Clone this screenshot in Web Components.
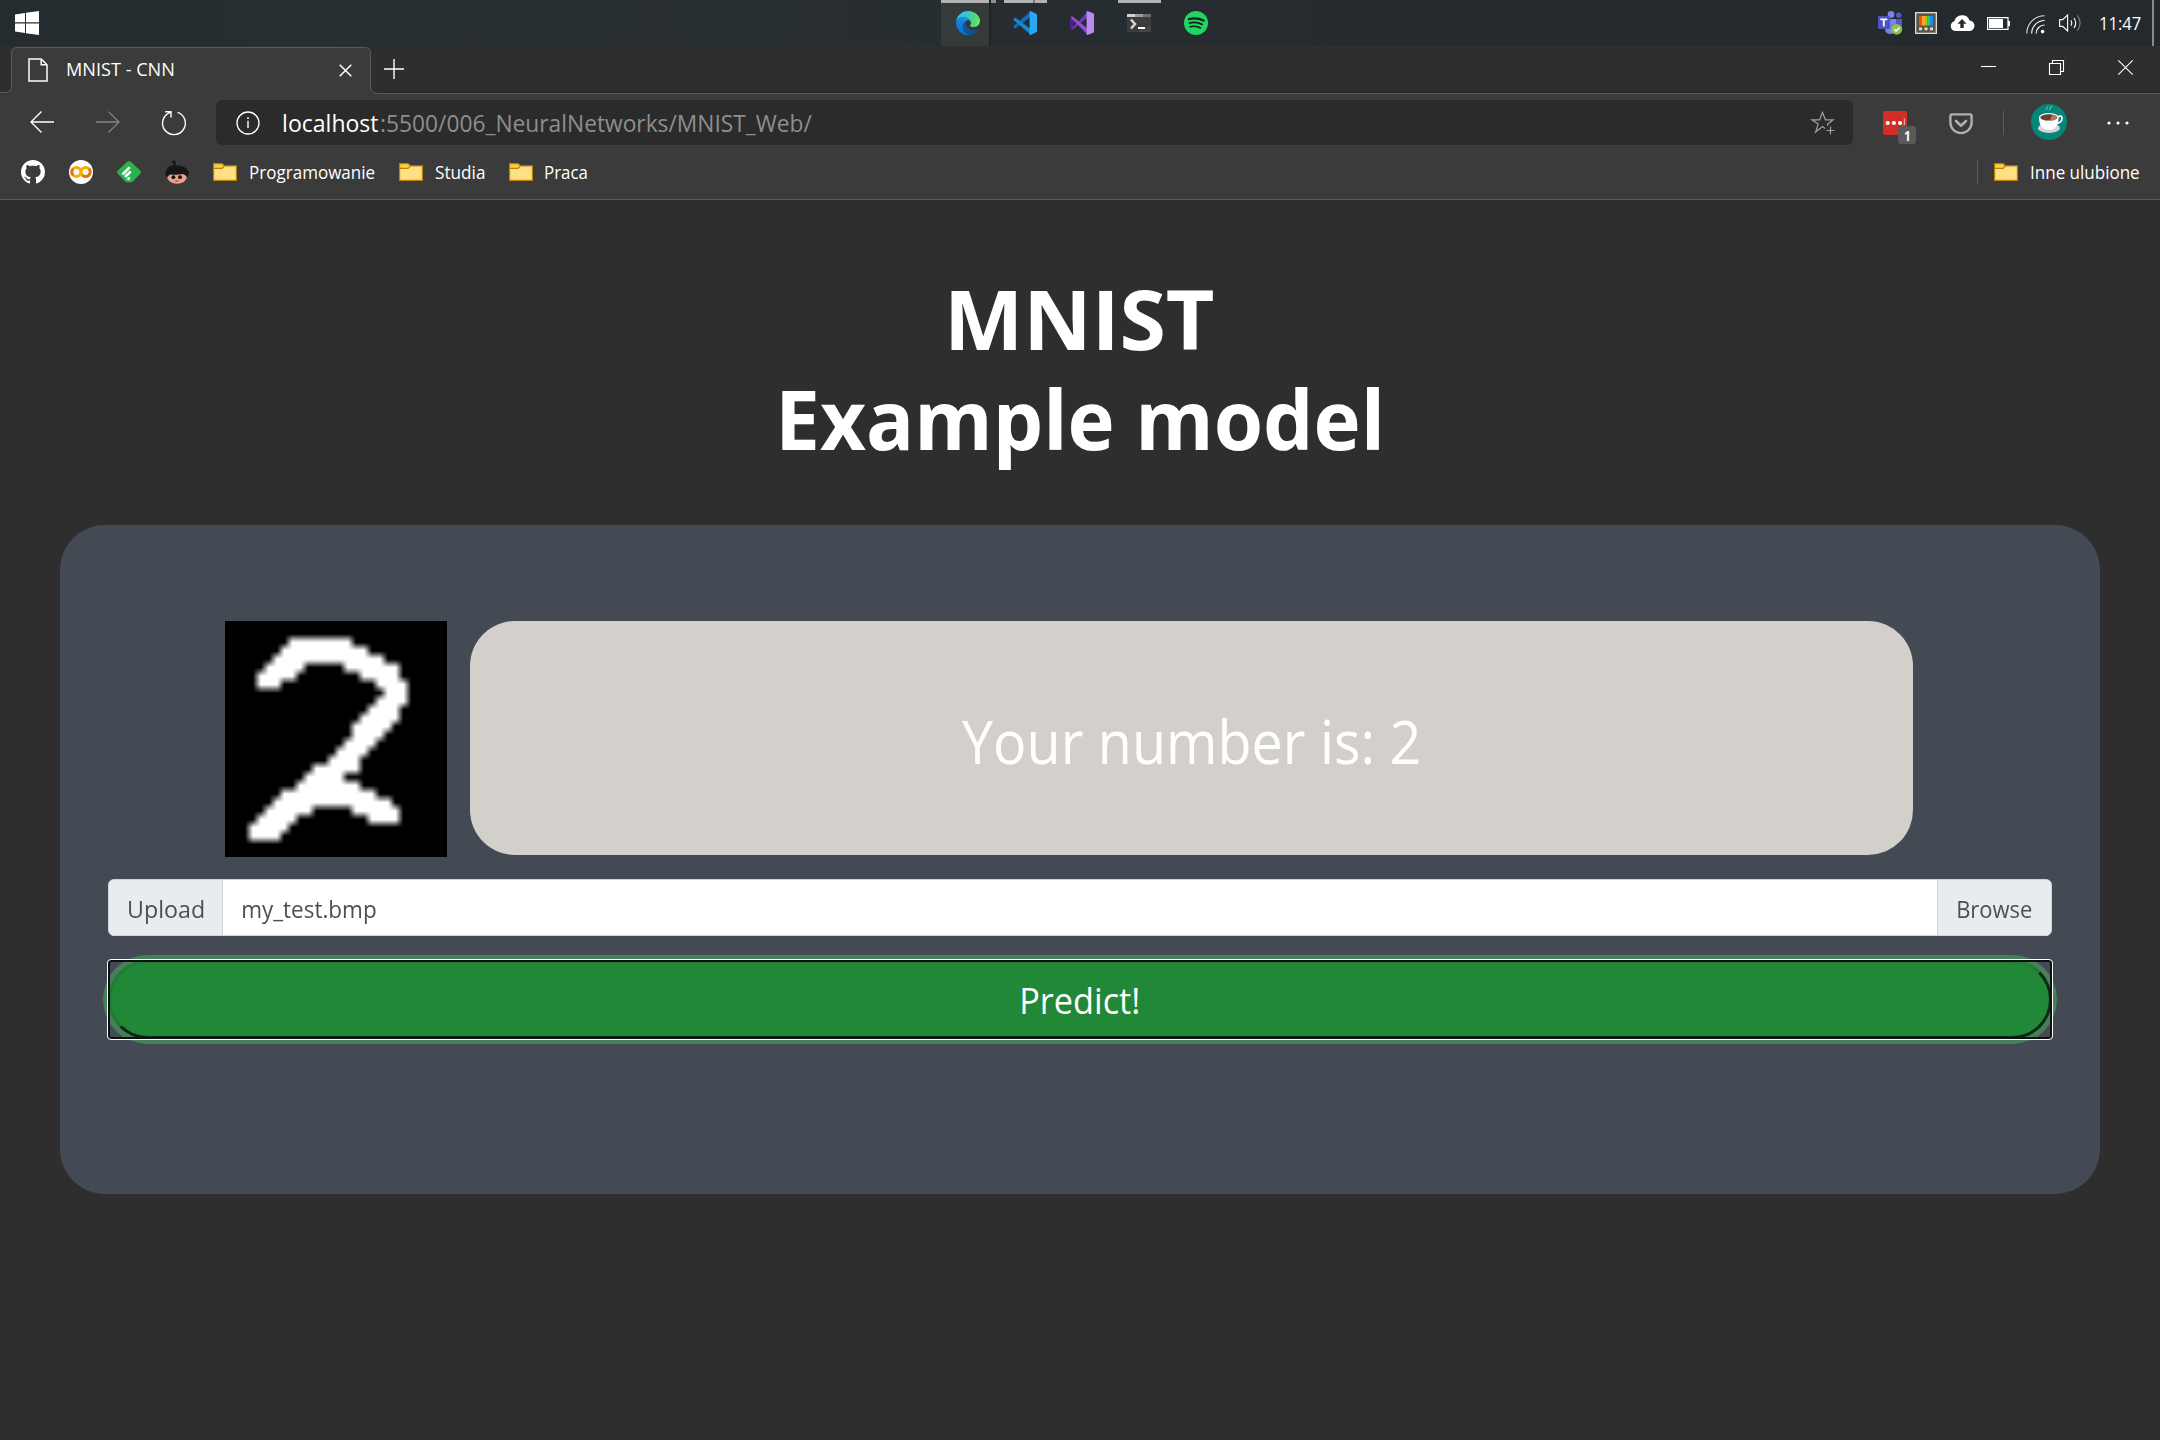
<!DOCTYPE html>
<html lang="pl">
<head>
<meta charset="utf-8">
<title>MNIST - CNN</title>
<style>
html,body{margin:0;padding:0;background:#2e2e2e}
body{width:2160px;height:1440px;overflow:hidden;font-family:"Open Sans","Noto Sans",sans-serif;color:#fff}
</style>
</head>
<body>
<desktop-screen></desktop-screen>
<script>
const define = (name, markup, setup) => customElements.define(name, class extends HTMLElement {
  constructor() {
    super();
    const t = document.createElement('template');
    t.innerHTML = markup;
    this.attachShadow({ mode: 'open' }).appendChild(t.content.cloneNode(true));
  }
  connectedCallback() { if (setup) setup.call(this, this.shadowRoot); }
});

/* A label whose glyphs span exactly the width given in `ink`. */
define('fit-text', `<style>
:host{display:block;flex:none;white-space:pre;overflow:visible}
span{display:inline-block;transform-origin:0 50%;white-space:pre}
</style><span><slot></slot></span>`, function (root) {
  const size = +this.getAttribute('size'), ink = +this.getAttribute('ink');
  const weight = this.getAttribute('weight') || 400;
  const ctx = document.createElement('canvas').getContext('2d');
  ctx.font = `${weight} ${size}px "Open Sans","Noto Sans",sans-serif`;
  const m = ctx.measureText(this.textContent);
  const scale = ink / (m.actualBoundingBoxLeft + m.actualBoundingBoxRight);
  const line = +this.getAttribute('line') || Math.round(size * 1.4);
  this.style.cssText += `;width:${ink}px;height:${line}px;line-height:${line}px;font-size:${size}px;font-weight:${weight}`;
  root.querySelector('span').style.transform = `translateX(${m.actualBoundingBoxLeft * scale}px) scaleX(${scale})`;
});

const ICONS = {
  windows: [24, 24, '<path fill="#fff" d="M0 3.4 10 2V11.3H0zM11 1.8 24 0V11.3H11zM0 12.4H10V22L0 20.6zM11 12.4H24V24L11 22.2z"/>'],
  edge: [256, 256, `<defs><linearGradient id="a" x1="63" y1="178" x2="242" y2="178" gradientUnits="userSpaceOnUse"><stop offset="0" stop-color="#0c59a4"/><stop offset="1" stop-color="#114a8b"/></linearGradient><linearGradient id="b" x1="157" y1="100" x2="46" y2="221" gradientUnits="userSpaceOnUse"><stop offset="0" stop-color="#1b9de2"/><stop offset=".4" stop-color="#1387d9"/><stop offset="1" stop-color="#0678d4"/></linearGradient><linearGradient id="c" x1="10" y1="60" x2="245" y2="110" gradientUnits="userSpaceOnUse"><stop offset="0" stop-color="#35c1f1"/><stop offset=".4" stop-color="#36c5dd"/><stop offset=".75" stop-color="#4fd67b"/><stop offset="1" stop-color="#66eb6e"/></linearGradient></defs>
<path fill="url(#a)" d="M235.68 195.46a93.73 93.73 0 0 1-10.54 4.71 101.87 101.87 0 0 1-35.9 6.46c-47.32 0-88.54-32.55-88.54-74.32a31.48 31.48 0 0 1 16.43-27.31c-42.8 1.8-53.8 46.4-53.8 72.53 0 73.88 68.09 81.37 82.76 81.37 7.91 0 19.84-2.3 27-4.56l1.31-.44a128.34 128.34 0 0 0 66.6-52.8 4 4 0 0 0-5.32-5.64Z"/><path fill="url(#b)" d="M105.73 241.42a79.2 79.2 0 0 1-22.74-21.34 80.72 80.72 0 0 1 29.53-120c3.12-1.47 8.45-4.13 15.54-4a32.35 32.35 0 0 1 25.69 13 31.88 31.88 0 0 1 6.36 18.66c0-.21 24.46-79.6-80-79.6-43.9 0-80 41.66-80 78.21a130.15 130.15 0 0 0 12.11 56 128 128 0 0 0 156.38 67.11 75.55 75.55 0 0 1-62.78-8Z"/><path fill="url(#c)" d="M152.33 148.86c-.81 1.05-3.3 2.5-3.3 5.66 0 2.61 1.7 5.12 4.72 7.23 14.38 10 41.49 8.68 41.56 8.68a59.56 59.56 0 0 0 30.27-8.35 61.38 61.38 0 0 0 30.43-52.88c.26-22.41-8-37.31-11.34-43.91C223.46 23.84 177.72 0 128 0A128 128 0 0 0 0 126.2c.48-36.54 36.8-66.05 80-66.05 3.5 0 23.46.34 42 10.07 16.34 8.58 24.9 18.94 30.85 29.21 6.18 10.67 7.28 24.15 7.28 29.52s-2.74 13.33-7.8 19.91Z"/>`],
  vscode: [24, 24, '<path fill="#0b6fb5" d="M.3 15.7 1.7 17.3Q2.1 17.7 2.6 17.3L18 5.8V0L.3 15.2Q0 15.5.3 15.7z"/><path fill="#1488d2" d="M.3 8.3 1.7 6.7Q2.1 6.3 2.6 6.7L18 18.2V24L.3 8.8Q0 8.5.3 8.3z"/><path fill="#29a9f1" d="M17.4 0 23.2 2.7Q24 3.1 24 4V20Q24 20.9 23.2 21.3L17.4 24Q16.4 24 16.6 23.2V.8Q16.4 0 17.4 0z"/>'],
  vs: [24, 24, '<path fill="#52218a" d="M0 6.5 1 5.8 3.6 6.8V17.2L1 18.2 0 17.5z"/><path fill="#7538b5" d="M1 18.2 18 0V6L4 17.5Q2.5 18.8 1 18.2z"/><path fill="#934fd4" d="M1 5.8Q2.5 5.2 4 6.5L18 18V24L1.5 7.5z"/><path fill="#b98aef" d="M17.5 0 23.2 2.3Q24 2.6 24 3.5V20.5Q24 21.4 23.2 21.7L17.5 24Q16.6 24 16.6 23V1Q16.6 0 17.5 0z"/>'],
  terminal: [24, 18, '<path fill="#454545" d="M0 0H24V18H0z"/><path fill="#2b2b2b" d="M0 3H24V10L10 18H0z" opacity=".35"/><path fill="#d0d0d0" d="M0 0H8V3H0z"/><path fill="#9c9c9c" d="M8 0H16V3H8z"/><path fill="#707070" d="M16 0H24V3H16z"/><path fill="none" stroke="#d5d5d5" stroke-width="2.5" d="M4 5.5 8 10 4 14.5"/><path fill="#fff" d="M11 13H18V15H11z"/>'],
  spotify: [24, 24, '<circle cx="12" cy="12" r="12" fill="#1ed760"/><g fill="none" stroke="#171d1c" stroke-linecap="round"><path stroke-width="2.3" d="M5 8.1Q12.5 5.9 19.6 9.6"/><path stroke-width="1.9" d="M5.5 12.1Q12 10.2 18 13.3"/><path stroke-width="1.5" d="M6 15.8Q11.7 14.3 16.6 17"/></g>'],
  teams: [24, 24, '<circle cx="13" cy="3.4" r="3.4" fill="#7b83eb"/><circle cx="20.8" cy="4.2" r="2.7" fill="#5059c9"/><path fill="#5059c9" d="M17 8H24V15Q24 18 20 18H17z"/><path fill="#7b83eb" d="M7 8H18V18Q17 23 12.5 23 7 23 7 17z"/><rect y="5" width="12" height="13" rx="1" fill="#4b53bc"/><path fill="#fff" d="M2.3 7.5H9.3V9.2H6.7V15.6H4.9V9.2H2.3z"/><circle cx="18.8" cy="18.3" r="5.4" fill="#8bc34a"/><path d="M16.2 18.3 18.1 20.2 21.6 16.6" stroke="#fff" stroke-width="1.5" fill="none"/>'],
  powertoys: [22, 22, '<path fill="#e5dccb" d="M0 0H22V22H0z"/><path fill="#59544c" d="M1.3 1.3H20.7V20.7H1.3z"/><path fill="#ee5018" d="M4 4H7V13.5H4z"/><path fill="#f7a81b" d="M7 4H10V13.5H7z"/><path fill="#8fd01e" d="M10 4H12.5V13.5H10z"/><path fill="#3fc55b" d="M12.5 4H15V13.5H12.5z"/><path fill="#1b8cf0" d="M15 4H18V13.5H15z"/><path fill="#e5dccb" d="M4 15.5H7V18.3H4zM9.5 15.5H12.5V18.3H9.5zM15 15.5H18V18.3H15z"/>'],
  cloud: [24, 16, '<path fill="#fff" d="M5 16A5 5 0 0 1 4.3 6.3 8 8 0 0 1 19.6 5.6 5.2 5.2 0 0 1 19 16z"/><path fill="#252b2e" d="M12 4 16.5 8.7H13.7V13H10.3V8.7H7.5z"/>'],
  battery: [23, 13, '<path d="M.6.6H21V12.4H.6z" fill="none" stroke="#fff" stroke-width="1.2"/><path fill="#fff" d="M2 2H16V11H2zM21 4H23V9H21z"/>'],
  wifi: [19, 19, '<g fill="none" stroke="#fff" stroke-width="1.1"><path d="M.8 18.5A17.8 17.8 0 0 1 18.6.7" opacity=".85"/><path d="M5.6 18.5A13 13 0 0 1 18.6 5.5"/><path d="M10.2 18.5A8.4 8.4 0 0 1 18.6 10"/></g><circle cx="16.6" cy="16.6" r="1.8" fill="#fff"/>'],
  speaker: [23, 18, '<g fill="none" stroke="#fff" stroke-width="1.1"><path d="M.6 5.6H3.6L8.6 1V17L3.6 12.4H.6z"/><path d="M12 6.3Q13.6 9 12 11.7"/><path d="M15 4Q18.4 9 15 14"/><path d="M18.3 1.4Q24 9 18.3 16.6" opacity=".4"/></g>'],
  page: [20, 24, '<path d="M1 1H13.2L19 6.8V23H1zM13.2 1V6.8H19" fill="none" stroke="#fff" stroke-width="1.5"/>'],
  tabclose: [13, 13, '<path d="M.7.7 12.3 12.3M12.3.7.7 12.3" stroke="#fff" stroke-width="1.5"/>'],
  plus: [20, 20, '<path d="M10 0V20M0 10H20" stroke="#fff" stroke-width="1.4"/>'],
  min: [15, 15, '<path d="M0 6.5H15" stroke="#fff" stroke-width="1.1"/>'],
  restore: [15, 15, '<path d="M.5 3.5H11.5V14.5H.5zM3.5 3.5V.5H14.5V11.5H11.5" fill="none" stroke="#fff" stroke-width="1.1"/>'],
  close: [15, 15, '<path d="M.3.3 14.7 14.7M14.7.3.3 14.7" stroke="#fff" stroke-width="1.1"/>'],
  back: [24, 22, '<path d="M24 11H1M11.5.6 1 11 11.5 21.4" fill="none" stroke="#fff" stroke-width="1.4"/>'],
  forward: [24, 22, '<path d="M0 11H23M12.5.6 23 11 12.5 21.4" fill="none" stroke="#858585" stroke-width="1.3"/>'],
  reload: [24, 24, '<path d="M15.6 1.4A11.4 11.4 0 1 1 8.6 1.3M3.2.8H9V6.4" fill="none" stroke="#fff" stroke-width="1.4"/>'],
  info: [24, 24, '<circle cx="12" cy="12" r="11" fill="none" stroke="#fff" stroke-width="1.3"/><path fill="#fff" d="M11.3 9.7H12.7V17H11.3zM11.2 6.3H12.8V8H11.2z"/>'],
  star: [24, 24, '<path d="M14.2 17.6 11.5 15.6 4.6 21 7.2 13.1.9 8.8H8.6L11.5 1.4 14.4 8.8H22.1L16.5 13.2 17 14.8M19.5 15.5V23.5M15.5 19.5H23.5" fill="none" stroke="#a0a0a0" stroke-width="1.2"/>'],
  lastpass: [24, 24, '<rect width="24" height="24" rx="2" fill="#d32d27"/><g fill="#fff"><circle cx="4.7" cy="12" r="2.1"/><circle cx="10.9" cy="12" r="2.1"/><circle cx="17" cy="12" r="2.1"/><path d="M20.8 7.5H21.8V14H20.8z" opacity=".75"/></g>'],
  pocket: [24, 22, '<path d="M3 1.4H21Q22.6 1.4 22.6 3V9.5A10.6 10.6 0 0 1 1.4 9.5V3Q1.4 1.4 3 1.4z" fill="#3b3b3b" stroke="#b0b0b0" stroke-width="2.4"/><path d="M7 8 12 12.8 17 8" fill="none" stroke="#b0b0b0" stroke-width="2.6" stroke-linecap="round" stroke-linejoin="round"/>'],
  avatar: [36, 36, '<circle cx="18" cy="18" r="18" fill="#04877a"/><path d="M15.5 6Q15 4 17 2.5M18.8 6.5Q18 4.5 21 2" fill="none" stroke="#6fbab2" stroke-width="1.1"/><ellipse cx="18" cy="24.2" rx="11" ry="4.8" fill="#d5d5d5"/><path d="M26.5 13Q31 10.5 31 14.5T25.5 19.5" fill="none" stroke="#fff" stroke-width="1.6"/><path fill="#fff" d="M8 13Q8 26 17.8 26T27.6 13z"/><ellipse cx="17.8" cy="13.2" rx="9.8" ry="4.2" fill="#f4f4f4"/><ellipse cx="17.8" cy="13.4" rx="8.4" ry="3.2" fill="#633f34"/><path d="M19 16.5 21.2 10.7Q26 11.5 26.2 13.4 25 16 19 16.5z" fill="#bd7650"/>'],
  dots: [24, 24, '<g fill="#fff"><circle cx="3" cy="12" r="1.6"/><circle cx="12" cy="12" r="1.6"/><circle cx="21" cy="12" r="1.6"/></g>'],
  github: [16, 16, '<path fill="#fff" d="M8 0C3.58 0 0 3.58 0 8c0 3.54 2.29 6.53 5.47 7.59.4.07.55-.17.55-.38 0-.19-.01-.82-.01-1.49-2.01.37-2.53-.49-2.69-.94-.09-.23-.48-.94-.82-1.13-.28-.15-.68-.52-.01-.53.63-.01 1.08.58 1.23.82.72 1.21 1.87.87 2.33.66.07-.52.28-.87.51-1.07-1.78-.2-3.64-.89-3.64-3.95 0-.87.31-1.59.82-2.15-.08-.2-.36-1.02.08-2.12 0 0 .67-.21 2.2.82.64-.18 1.32-.27 2-.27s1.36.09 2 .27c1.53-1.04 2.2-.82 2.2-.82.44 1.1.16 1.92.08 2.12.51.56.82 1.27.82 2.15 0 3.07-1.87 3.75-3.65 3.95.29.25.54.73.54 1.48 0 1.07-.01 1.93-.01 2.2 0 .21.15.46.55.38A8.01 8.01 0 0 0 16 8c0-4.42-3.58-8-8-8z"/>'],
  colab: [24, 24, '<circle cx="12" cy="12" r="12" fill="#fff"/><g fill="none" stroke-width="2.9"><circle cx="16.7" cy="12" r="4.5" stroke="#f9ab00"/><circle cx="7.3" cy="12" r="4.5" stroke="#f9ab00"/><path d="M4.1 15.2A4.5 4.5 0 0 1 4.1 8.8M19.9 8.8A4.5 4.5 0 0 1 13.5 15.2" stroke="#e8710a"/></g>'],
  feedly: [24, 24, '<path fill="#2bb24c" d="M10.4 1.6Q12 .4 13.6 1.6L23.4 10.8Q24.6 12 23.4 13.4L15.8 21.6Q15.2 22.2 14.2 22.2H9.8Q8.8 22.2 8.2 21.6L.6 13.4Q-.6 12 .6 10.8z"/><g stroke="#fff" stroke-width="2.6" stroke-linecap="round"><path d="M6.2 13.7 12 8"/><path d="M8.8 16.3 13 12.2"/><path d="M11.4 18.8 12 18.2"/></g>'],
  girl: [24, 24, '<ellipse cx="12" cy="16.5" rx="10" ry="7.3" fill="#eaa08a"/><path fill="#171717" d="M6.3 1Q8 1.6 9 .2 11.5 1.2 10.8 5.2 22.5 5.6 23.4 12L24 11.6Q24 15.6 21.8 17.6 21 14.6 17.5 14 12 15.4 6.5 14.4 3 14.8 2.4 17.6 0 15.6.2 11.8L.8 12Q2 5.8 8.6 5.3 8.8 3 6.3 1z"/><circle cx="8.4" cy="17.2" r="1.9" fill="#111"/><circle cx="15" cy="17.2" r="1.9" fill="#111"/><path d="M10.3 21H13.5" stroke="#a9493e" stroke-width="1.2"/>'],
  folder: [24, 18, '<path fill="#ffcf3d" stroke="#b98408" stroke-width="1.2" d="M.6 17.4V.6H9L11.5 3H23.4V17.4z"/><path fill="#ffe085" stroke="#b98408" stroke-width="1.2" d="M.6 17.4V5.4H9L11.5 3H23.4V17.4z"/>']
};

/* <ui-icon name w h> draws one of the glyphs above. */
define('ui-icon', '<style>:host{display:block;flex:none}svg{display:block;overflow:visible}</style>', function (root) {
  const [vw, vh, body] = ICONS[this.getAttribute('name')];
  const w = this.getAttribute('w') || vw, h = this.getAttribute('h') || vh;
  this.style.width = w + 'px'; this.style.height = h + 'px';
  const t = document.createElement('template');
  t.innerHTML = `<svg width="${w}" height="${h}" viewBox="0 0 ${vw} ${vh}">${body}</svg>`;
  root.appendChild(t.content);
});

define('task-button', `<style>
:host{display:flex;position:relative;width:57px;height:46px;align-items:center;justify-content:center;flex:none}
i{position:absolute;top:0;height:3px;background:#b2b2b2}
.act{left:1.5px;width:48px;height:46px;background:#353a3a}
.edge1{left:49.5px;width:2px;height:46px;background:#202425}
.edge2{left:51.5px;width:5px;background:#8f8f8f}
::slotted(ui-icon){position:relative}
:host(:not([active])) .act,:host(:not([active])) .edge1,:host(:not([active])) .edge2{display:none}
:host([active]) .line{left:1.5px;width:48px}
.line{left:7.5px;width:43px}
:host(:not([open]):not([active])) .line{display:none}
.notch{left:36.5px;width:2px;background:#7b7b7b}
:host(:not([many])) .notch{display:none}
</style><i class="act"></i><i class="edge1"></i><i class="edge2"></i><i class="line"></i><i class="notch"></i><slot></slot>`);

define('task-bar', `<style>
:host{display:grid;grid-template-columns:939.5px 1fr auto;height:46px;background:linear-gradient(90deg,#252c2f,#293033 20%,#252b2e 60%,#23292c)}
.start,.apps,.tray{display:flex;align-items:center}
.start{padding-left:15px}
.tray{padding-right:6px}
.end{width:2px;height:46px;background:#868b8d;margin-left:11px}
</style>
<div class="start"><ui-icon name="windows"></ui-icon></div>
<div class="apps">
<task-button active><ui-icon name="edge" w="24" h="24"></ui-icon></task-button>
<task-button open many><ui-icon name="vscode"></ui-icon></task-button>
<task-button><ui-icon name="vs"></ui-icon></task-button>
<task-button open><ui-icon name="terminal"></ui-icon></task-button>
<task-button><ui-icon name="spotify"></ui-icon></task-button>
</div>
<div class="tray">
<ui-icon name="teams"></ui-icon>
<ui-icon name="powertoys" style="margin-left:13px"></ui-icon>
<ui-icon name="cloud" style="margin-left:13px"></ui-icon>
<ui-icon name="battery" style="margin-left:13px"></ui-icon>
<ui-icon name="wifi" style="margin-left:16px;margin-top:2px"></ui-icon>
<ui-icon name="speaker" style="margin-left:14px"></ui-icon>
<fit-text size="18" ink="41" style="margin-left:18px">11:47</fit-text>
<div class="end"></div>
</div>`);

define('tab-strip', `<style>
:host{display:flex;height:48px;background:linear-gradient(#2e2e2e 0 46px,#262626 46px 47px,#5c5c5c 47px 48px)}
.tab{display:flex;align-items:center;width:380px;height:48px;flex:none;position:relative}
.shape{position:absolute;left:0;top:0}
.tab>*:not(.shape){position:relative}
.win{display:flex;margin-left:auto;padding:14px 27px 0 0;gap:54px;align-items:flex-start}
</style>
<div class="tab">
<svg class="shape" width="380" height="48"><path fill="#2e2e2e" d="M0 0H380V48H0z"/><path fill="#3b3b3b" stroke="#5c5c5c" d="M-1 47.5 0 46.5H4.5Q11.5 46.5 11.5 40V7Q11.5 1.5 17 1.5H364.5Q370.5 1.5 370.5 7V40Q370.5 47.5 378 47.5H381V50H-1z"/></svg>
<ui-icon name="page" style="margin-left:28px"></ui-icon>
<fit-text size="18.5" ink="107" style="margin-left:19px;margin-top:-2px">MNIST - CNN</fit-text>
<ui-icon name="tabclose" style="margin-left:165px"></ui-icon>
</div>
<ui-icon name="plus" style="margin-left:4px;margin-top:13px"></ui-icon>
<div class="win"><ui-icon name="min" style="margin-right:-1px"></ui-icon><ui-icon name="restore"></ui-icon><ui-icon name="close"></ui-icon></div>`);

define('address-bar', `<style>
:host{display:flex;align-items:center;width:1637px;height:45px;border-radius:6px;background:#2b2b2b;flex:none;box-sizing:border-box;padding:0 18px 0 20px}
.path{color:#8e8e8e;margin-left:3px}
</style><ui-icon name="info"></ui-icon>
<fit-text size="24" ink="94" style="margin-left:24px">localhost</fit-text>
<fit-text class="path" size="24" ink="431">:5500/006_NeuralNetworks/MNIST_Web/</fit-text>
<ui-icon name="star" style="margin-left:auto"></ui-icon>`);

define('tool-bar', `<style>
:host{display:flex;align-items:center;height:57px;padding:0 30px;background:#3b3b3b}
.ext{position:relative;margin-left:30px}
.badge{position:absolute;left:15px;top:15px;width:18px;height:18px;border-radius:3px;background:#5a5a5a;display:flex;align-items:center;justify-content:center}
.sep{width:1px;height:24px;background:#5c5c5c;margin-left:30px}
</style>
<ui-icon name="back" style="margin-top:-2px"></ui-icon>
<ui-icon name="forward" style="margin-left:42px;margin-top:-2px"></ui-icon>
<ui-icon name="reload" style="margin-left:42px"></ui-icon>
<address-bar style="margin-left:30px"></address-bar>
<div class="ext"><ui-icon name="lastpass"></ui-icon><div class="badge"><fit-text size="15" ink="5.5" weight="700" line="18">1</fit-text></div></div>
<ui-icon name="pocket" style="margin-left:42px;margin-top:2px"></ui-icon>
<div class="sep"></div>
<ui-icon name="avatar" style="margin-left:27px;margin-top:-1px"></ui-icon>
<ui-icon name="dots" style="margin-left:39px"></ui-icon>`);

define('bookmark-folder', `<style>
:host{display:flex;align-items:center;gap:12.5px;flex:none}
</style><ui-icon name="folder"></ui-icon><slot></slot>`);

define('bookmarks-bar', `<style>
:host{display:flex;align-items:center;gap:24px;height:49px;box-sizing:border-box;padding:0 21px 6px;background:#3b3b3b;border-bottom:1px solid #5a5a5a}
.sep{width:1px;height:24px;background:#5c5c5c;margin-left:auto;margin-right:-8px}
</style>
<ui-icon name="github" w="24" h="24"></ui-icon><ui-icon name="colab"></ui-icon><ui-icon name="feedly"></ui-icon><ui-icon name="girl"></ui-icon>
<bookmark-folder><fit-text size="18" ink="125">Programowanie</fit-text></bookmark-folder>
<bookmark-folder><fit-text size="18" ink="49.5">Studia</fit-text></bookmark-folder>
<bookmark-folder><fit-text size="18" ink="42">Praca</fit-text></bookmark-folder>
<div class="sep"></div>
<bookmark-folder><fit-text size="18" ink="108.5">Inne ulubione</fit-text></bookmark-folder>`);

/* 28x28 handwritten sample: each row lists [first, last] columns that are lit. */
const DIGIT = { 2:[[8,15]],3:[[7,17]],4:[[6,19]],5:[[5,9],[15,21]],6:[[4,8],[17,21]],7:[[4,6],[19,22]],8:[[20,22]],9:[[19,22]],10:[[18,21]],11:[[17,21]],12:[[16,20]],13:[[16,19]],14:[[15,18]],15:[[14,17]],16:[[13,16]],17:[[11,16]],18:[[10,14]],19:[[9,16]],20:[[7,18]],21:[[6,20]],22:[[5,10],[16,21]],23:[[4,8],[18,21]],24:[[3,7]],25:[[3,6]] };
define('digit-preview', `<style>:host{display:block;flex:none;width:222px;height:236px;background:#000}canvas{display:block;width:222px;height:236px}</style><canvas width="28" height="28"></canvas>`, function (root) {
  const ctx = root.querySelector('canvas').getContext('2d');
  ctx.fillStyle = '#000'; ctx.fillRect(0, 0, 28, 28);
  ctx.fillStyle = '#fff';
  for (const [row, runs] of Object.entries(DIGIT)) for (const [a, b] of runs) ctx.fillRect(a, +row, b - a + 1, 1);
});

define('result-box', `<style>
:host{display:flex;align-items:center;justify-content:center;width:1443px;height:234px;border-radius:45px;background:#d3d0cb;box-sizing:border-box;padding:4px 3px 0 0}
</style><slot></slot>`);

define('file-input', `<style>
:host{display:flex;height:57px;box-sizing:border-box;border:1px solid #ced4da;border-radius:6px;background:#fff;color:#495057;overflow:hidden}
div{display:flex;align-items:center;padding-top:3px;box-sizing:border-box}
.up{width:114px;background:#e9ecef;border-right:1px solid #ced4da;padding-left:20px}
.name{flex:1;padding-left:20px}
.br{width:114px;background:#e9ecef;border-left:1px solid #ced4da;padding-left:20px}
</style>
<div class="up"><fit-text size="24" ink="74.5">Upload</fit-text></div>
<div class="name"><fit-text size="24" ink="133">my_test.bmp</fit-text></div>
<div class="br"><fit-text size="24" ink="74">Browse</fit-text></div>`);

define('predict-button', `<style>
:host{display:block;position:relative;height:79px}
button{display:flex;align-items:center;justify-content:center;width:100%;height:79px;box-sizing:border-box;margin:0;padding:3px 0 0;border:3px solid;border-color:#1f7d33 #0a2a12 #0a2a12 #1f7d33;border-radius:45px;background:#218838;color:#fff;font-family:inherit;box-shadow:0 0 0 5px rgba(72,180,97,.5)}
.focus{position:absolute;inset:-1px;border:1px solid #fff;border-radius:4px;box-shadow:inset 0 0 0 2px #101010;pointer-events:none}
</style><button><slot></slot></button><div class="focus"></div>`);

define('model-card', `<style>
:host{display:flex;flex-direction:column;box-sizing:border-box;width:2040px;height:669px;margin:0 60px;padding:96px 48px 0;border-radius:45px;background:#444a53}
.row{display:flex;gap:23px;padding-left:117px}
file-input{margin-top:22px}
predict-button{margin-top:24px}
</style>
<div class="row"><digit-preview></digit-preview><result-box><fit-text size="59.5" ink="456.5">Your number is: 2</fit-text></result-box></div>
<file-input></file-input>
<predict-button><fit-text size="36" ink="116">Predict!</fit-text></predict-button>`);

define('web-page', `<style>
:host{display:flex;flex-direction:column;flex:1;background:#2e2e2e;box-sizing:border-box;border-bottom:1px solid #33282d}
header{display:flex;flex-direction:column;align-items:center;padding-top:68px;height:325px;box-sizing:border-box}
</style>
<header><fit-text size="83" weight="700" ink="262.5" line="100" style="margin-left:5px">MNIST</fit-text>
<fit-text size="83" weight="700" ink="597" line="100" style="margin-left:1px">Example model</fit-text></header>
<model-card></model-card>`);

define('desktop-screen', `<style>
:host{display:flex;flex-direction:column;width:2160px;height:1440px}
</style><task-bar></task-bar><tab-strip></tab-strip><tool-bar></tool-bar><bookmarks-bar></bookmarks-bar><web-page></web-page>`);
</script>
</body>
</html>
